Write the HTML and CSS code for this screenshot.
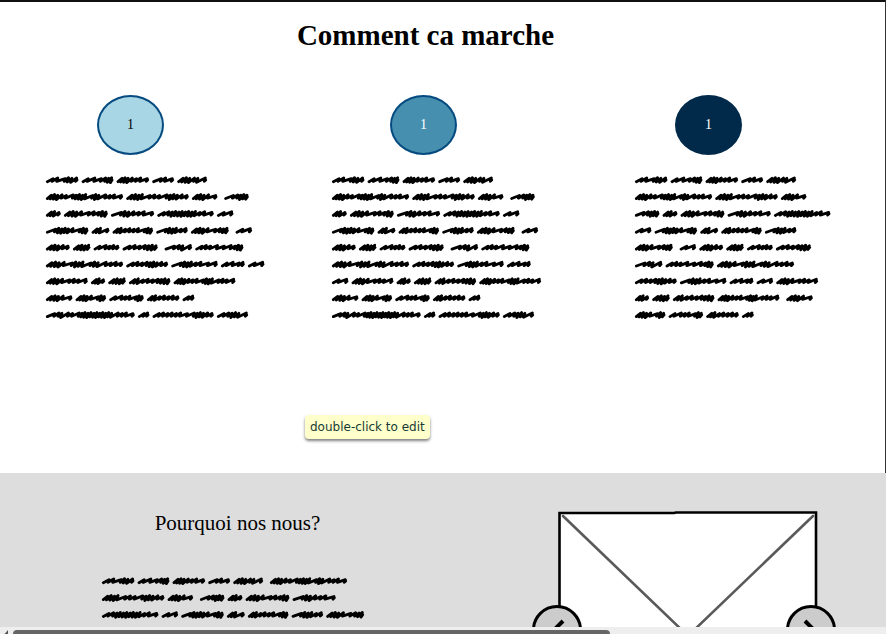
FILE: index.html
```html
<!DOCTYPE html>
<html lang="fr">
<head>
<meta charset="utf-8">
<title>Comment ca marche</title>
<link rel="stylesheet" href="styles.css">
</head>
<body>
<main class="page">
  <section class="steps">
    <h1 class="steps-title">Comment ca marche</h1>
    <div class="steps-grid">
      <article class="step">
        <div class="badge badge-light">1</div>
        <svg class="scribble" data-text="0-4|5-7 8|9-13|14-18 19|20-23 24-25|26-30|31-35|36-40|41-44"></svg>
      </article>
      <article class="step step-middle">
        <div class="badge badge-medium">1</div>
        <svg class="scribble" data-text="0-4|5-7 8|9-13|14-18 19|20-23 24-25|26-29|30-35|36-40|41-44"></svg>
      </article>
      <article class="step step-last">
        <div class="badge badge-dark">1</div>
        <svg class="scribble" data-text="0-4|5-7|8-12|13-17|18 19-23|24-26|27-31|32-35 36|37-40"></svg>
      </article>
    </div>
    <div class="tooltip" role="tooltip">double-click to edit</div>
  </section>
  <section class="why">
    <div class="why-text">
      <h2 class="why-title">Pourquoi nos nous?</h2>
      <svg class="scribble" data-text="0-4 5|6-7 8-11|12-18"></svg>
    </div>
    <div class="carousel">
      <svg class="picture" viewBox="0 0 260 250" aria-hidden="true">
        <path class="frame" d="M1.5 2 116 2 118 1.5H258V248H1.5Z"/>
        <path class="cross" d="M5 5 250 240M255 5 10 240"/>
      </svg>
      <button class="arrow arrow-prev" type="button" aria-label="Précédent">
        <svg viewBox="0 0 50 50"><path d="M31 16 22 25 31 34"/></svg>
      </button>
      <button class="arrow arrow-next" type="button" aria-label="Suivant">
        <svg viewBox="0 0 50 50"><path d="M19 16 28 25 19 34"/></svg>
      </button>
    </div>
  </section>
  <div class="scrollbar">
    <svg class="scroll-arrow" viewBox="0 0 8 7"><path d="M8 0V7H2Z"/></svg>
    <div class="scroll-thumb"></div>
  </div>
</main>
<script src="script.js"></script>
</body>
</html>
```
FILE: styles.css
```css
* { box-sizing: border-box; }

body {
  margin: 0;
  background: #fff;
  color: #000;
  font-family: "Liberation Serif", serif;
}

.page {
  display: flex;
  flex-direction: column;
  height: 100vh;
  overflow: hidden;
}

.steps {
  position: relative;
  flex: none;
  padding: 16px 0 149px;
  border-top: 2px solid #111;
  border-right: 1px solid #333;
}

.steps-title {
  margin: 0 34px 0 0;
  font-size: 29px;
  line-height: 34px;
  text-align: center;
}

.steps-grid {
  display: grid;
  grid-template-columns: 286fr 303fr 250fr;
  margin-top: 43px;
  padding-left: 46px;
}

.badge {
  display: flex;
  align-items: center;
  justify-content: center;
  width: 67px;
  height: 60px;
  margin: 0 0 16px 51px;
  border: 2px solid #064b80;
  border-radius: 50%;
  font-size: 14px;
}

.step-middle .badge { margin-left: 58px; }
.step-last .badge { margin-left: 40px; }

.badge-light { background: #a9d6e5; }
.badge-medium { background: #468faf; color: #fff; }
.badge-dark { background: #012a4a; border-color: #012a4a; color: #fff; }

.scribble {
  display: block;
  overflow: visible;
  fill: none;
  stroke: #000;
  stroke-linecap: round;
  stroke-linejoin: round;
}

.tooltip {
  position: absolute;
  left: 305px;
  bottom: 34px;
  padding: 0 5px;
  border-radius: 4px;
  background: #ffffcb;
  box-shadow: 0 2px 3px rgba(0, 0, 0, 0.5);
  color: #173a35;
  font: 12px/24px "DejaVu Sans", sans-serif;
}

.why {
  display: flex;
  flex: 1;
  justify-content: space-between;
  min-height: 0;
  overflow: hidden;
  padding: 38px 68px 0 102px;
  background: #ddd;
}

.why-title {
  margin: 0 0 37px;
  padding-left: 10px;
  font-size: 21px;
  font-weight: 400;
  line-height: 24px;
  text-align: center;
}

.carousel {
  position: relative;
  width: 260px;
}

.picture { display: block; width: 100%; }
.frame { fill: #fff; stroke: #000; stroke-width: 2.6; }
.cross { stroke: #5a5a5a; stroke-width: 2.6; stroke-linecap: round; }

.arrow {
  position: absolute;
  top: 94px;
  width: 50px;
  height: 50px;
  padding: 0;
  border: 3px solid #000;
  border-radius: 50%;
  background: #ccc;
}

.arrow-prev { left: -26px; }
.arrow-next { right: -18px; }

.arrow svg {
  display: block;
  width: 50px;
  margin: -3px;
  fill: none;
  stroke: #000;
  stroke-width: 4;
}

.scrollbar {
  display: flex;
  flex: none;
  height: 7px;
  padding-top: 3px;
  background: #eee;
}

.scroll-arrow { width: 8px; height: 7px; fill: #555; }

.scroll-thumb {
  width: 67.4%;
  height: 4px;
  margin-left: 5px;
  border-radius: 4px 4px 0 0;
  background: #666;
}
```
FILE: script.js
```js
// Scribbled placeholder words: width in thirds of a pixel, then the stroke rhythm
// (s = short slash, r = long swoosh, m = dense slash).
const words = [
  [93, "ssrmms"], [91, "srrsmm"], [93, "mmmsssr"], [61, "rsr"], [85, "mmmsmr"],
  [227, "mmmssrmmmmrmmrssr"], [183, "mmmmrssrmmmss"], [72, "mmmsr"], [69, "rsmmm"],
  [40, "mms"], [127, "mmmsrssmm"], [125, "rmmsssr"], [165, "ssmmmmmmmmssr"], [45, "sr"],
  [123, "rmmmmsrmm"], [49, "mmr"], [117, "mmssssrmm"], [90, "rmmmss"], [109, "mmmsrsmm"],
  [45, "sr"], [67, "mmmss"], [48, "mmmm"], [73, "srsss"], [101, "ssssmmm"],
  [78, "rsmr"], [140, "sssrrrsmm"], [227, "mmmsrmmmrmmrsss"], [121, "ssssmmmss"],
  [135, "rmmmssrr"], [67, "srrs"], [45, "sr"], [121, "mmmsrssr"], [38, "mms"],
  [48, "mmmm"], [120, "mmssssmmm"], [181, "mmmsssrmmmrssr"], [75, "mmmsr"], [87, "mmmsrmm"],
  [99, "srssrmm"], [93, "mmsssss"], [31, "ss"], [262, "rsmrsrmmmmmmmmmmmrssr"],
  [30, "ss"], [179, "ssssssrrmmmss"], [89, "ssmmmr"]
];
const advance = { s: 14, r: 22, m: 10 };
const gap = 14, wideGap = 25, pitch = 50.6;

// Each stroke slants up to the right, then falls steeply; dense ones swing wider.
function wordPath(x, y, width, rhythm) {
  const total = [...rhythm].reduce((sum, c) => sum + advance[c], 0);
  const scale = (width - 12) / total;
  let at = x + 4;
  let d = `M${at} ${y + 5}`;
  [...rhythm].forEach((c, i) => {
    const step = advance[c] * scale;
    const dense = c === "m";
    const top = y - (dense ? 5 + (i % 2) * 2 : 4 + (i % 2) * 2);
    const foot = y + (dense ? 6 + (i % 3) : 4);
    d += `L${(at + step + 3).toFixed(1)} ${top}L${(at + step - (dense ? 1 : 0)).toFixed(1)} ${foot}`;
    at += step;
  });
  return d + `L${(at + 4).toFixed(1)} ${y}`;
}

for (const svg of document.querySelectorAll(".scribble")) {
  const lines = svg.dataset.text.split("|");
  let d = "", widest = 0;
  lines.forEach((line, row) => {
    let x = 0;
    for (const group of line.split(" ")) {
      const [first, last = first] = group.split("-").map(Number);
      for (let i = first; i <= last; i++) {
        const [width, rhythm] = words[i];
        d += wordPath(x, 27 + row * pitch, width + 4, rhythm);
        x += width + gap;
      }
      x += wideGap - gap;
    }
    widest = Math.max(widest, x - wideGap);
  });
  const height = Math.ceil(lines.length * 17);
  const width = Math.ceil(widest / 3);
  svg.setAttribute("viewBox", `0 0 ${width * 3} ${height * 3}`);
  svg.setAttribute("width", width);
  svg.setAttribute("height", height);
  const path = document.createElementNS("http://www.w3.org/2000/svg", "path");
  path.setAttribute("d", d);
  path.setAttribute("stroke-width", "8.5");
  svg.append(path);
}
```
